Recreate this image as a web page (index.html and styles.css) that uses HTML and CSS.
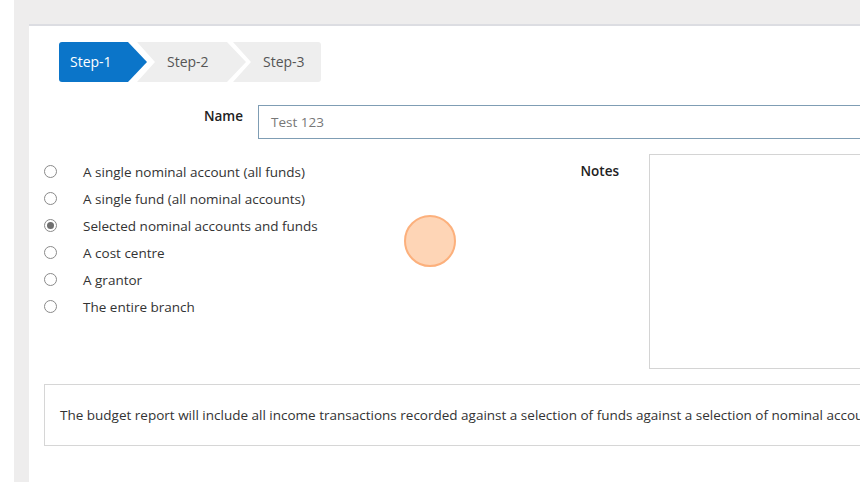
FILE: index.html
```html
<!DOCTYPE html>
<html>
<head>
<meta charset="utf-8">
<link rel="stylesheet" href="styles.css">
</head>
<body>
<div class="page">
  <div class="panel">
    <div class="steps">
      <div class="step step-first active">Step-1</div>
      <div class="step step-mid">Step-2</div>
      <div class="step step-last">Step-3</div>
    </div>

    <div class="name-row">
      <label class="field-label name-label">Name</label>
      <div class="text-input">Test 123</div>
    </div>

    <div class="options-row">
      <ul class="radio-list">
        <li class="radio-item"><span class="radio"></span><span class="radio-text">A single nominal account (all funds)</span></li>
        <li class="radio-item"><span class="radio"></span><span class="radio-text">A single fund (all nominal accounts)</span></li>
        <li class="radio-item"><span class="radio checked"></span><span class="radio-text">Selected nominal accounts and funds</span></li>
        <li class="radio-item"><span class="radio"></span><span class="radio-text">A cost centre</span></li>
        <li class="radio-item"><span class="radio"></span><span class="radio-text">A grantor</span></li>
        <li class="radio-item"><span class="radio"></span><span class="radio-text">The entire branch</span></li>
      </ul>
      <label class="field-label notes-label">Notes</label>
      <div class="notes-box"></div>
    </div>

    <div class="description">The budget report will include all income transactions recorded against a selection of funds against a selection of nominal accounts.</div>
  </div>
</div>
<div class="click-marker"></div>
</body>
</html>
```

FILE: styles.css
```css
html, body {
  margin: 0;
  padding: 0;
  overflow: hidden;
}

body {
  background: #ffffff;
  font-family: "Open Sans", "Noto Sans", sans-serif;
  font-size: 13.5px;
  color: #333333;
  width: 860px;
  height: 482px;
  position: relative;
}

.page {
  margin-left: 14px;
  height: 482px;
  background: #eeeded;
  padding: 24px 0 0 15px;
  box-sizing: border-box;
}

.panel {
  width: 1100px;
  height: 470px;
  background: #ffffff;
  border-top: 2px solid #dcdde2;
  padding: 16px 0 0 15px;
  box-sizing: border-box;
}

.steps {
  display: flex;
  margin-left: 15px;
  height: 40px;
}

.step {
  height: 40px;
  line-height: 40px;
  box-sizing: border-box;
  white-space: nowrap;
  font-size: 14px;
}

.step-first {
  width: 88px;
  padding-left: 11px;
  background: #0b75c9;
  color: #ffffff;
  border-radius: 3px 0 0 3px;
  clip-path: polygon(0 0, calc(100% - 19px) 0, 100% 50%, calc(100% - 19px) 100%, 0 100%);
}

.step-mid {
  width: 109px;
  margin-left: -10px;
  padding-left: 30px;
  background: #eeeeee;
  color: #555555;
  clip-path: polygon(0 0, calc(100% - 19px) 0, 100% 50%, calc(100% - 19px) 100%, 0 100%, 18px 50%);
}

.step-last {
  width: 88px;
  margin-left: -13px;
  padding-left: 30px;
  background: #eeeeee;
  color: #555555;
  border-radius: 0 3px 3px 0;
  clip-path: polygon(0 0, 100% 0, 100% 100%, 0 100%, 18px 50%);
}

.name-row {
  display: flex;
  align-items: flex-start;
  gap: 15px;
  margin-top: 23px;
}

.field-label {
  font-weight: 600;
  color: #222222;
  line-height: 20px;
  text-align: right;
  font-size: 13.5px;
}

.name-label {
  width: 199px;
  padding-top: 1px;
}

.text-input {
  flex: 1;
  height: 34px;
  box-sizing: border-box;
  border: 1px solid #7f9db4;
  padding-left: 12px;
  line-height: 32px;
  color: #777777;
}

.options-row {
  display: flex;
  align-items: flex-start;
  margin-top: 15px;
}

.radio-list {
  list-style: none;
  margin: 0;
  padding: 4px 0 0 0;
  width: 500px;
}

.radio-item {
  display: flex;
  align-items: center;
  height: 27px;
}

.radio {
  width: 13px;
  height: 13px;
  box-sizing: border-box;
  border: 1px solid #8a8a8a;
  border-radius: 50%;
  background: #ffffff;
  margin-right: 26px;
  display: flex;
  align-items: center;
  justify-content: center;
}

.radio.checked::after {
  content: "";
  width: 7px;
  height: 7px;
  border-radius: 50%;
  background: #6f6f6f;
}

.radio-text {
  color: #333333;
}

.notes-label {
  width: 75px;
  padding-top: 7px;
}

.notes-box {
  flex: 1;
  margin-left: 30px;
  height: 215px;
  box-sizing: border-box;
  border: 1px solid #d4d4d4;
}

.description {
  margin-top: 15px;
  height: 62px;
  box-sizing: border-box;
  border: 1px solid #d6d6d6;
  padding-left: 15px;
  line-height: 60px;
  white-space: nowrap;
  overflow: hidden;
  color: #333333;
}

.click-marker {
  position: absolute;
  left: 404px;
  top: 215px;
  width: 52px;
  height: 52px;
  box-sizing: border-box;
  border-radius: 50%;
  background: #fed5b6;
  border: 2px solid #fcb07c;
}
```
